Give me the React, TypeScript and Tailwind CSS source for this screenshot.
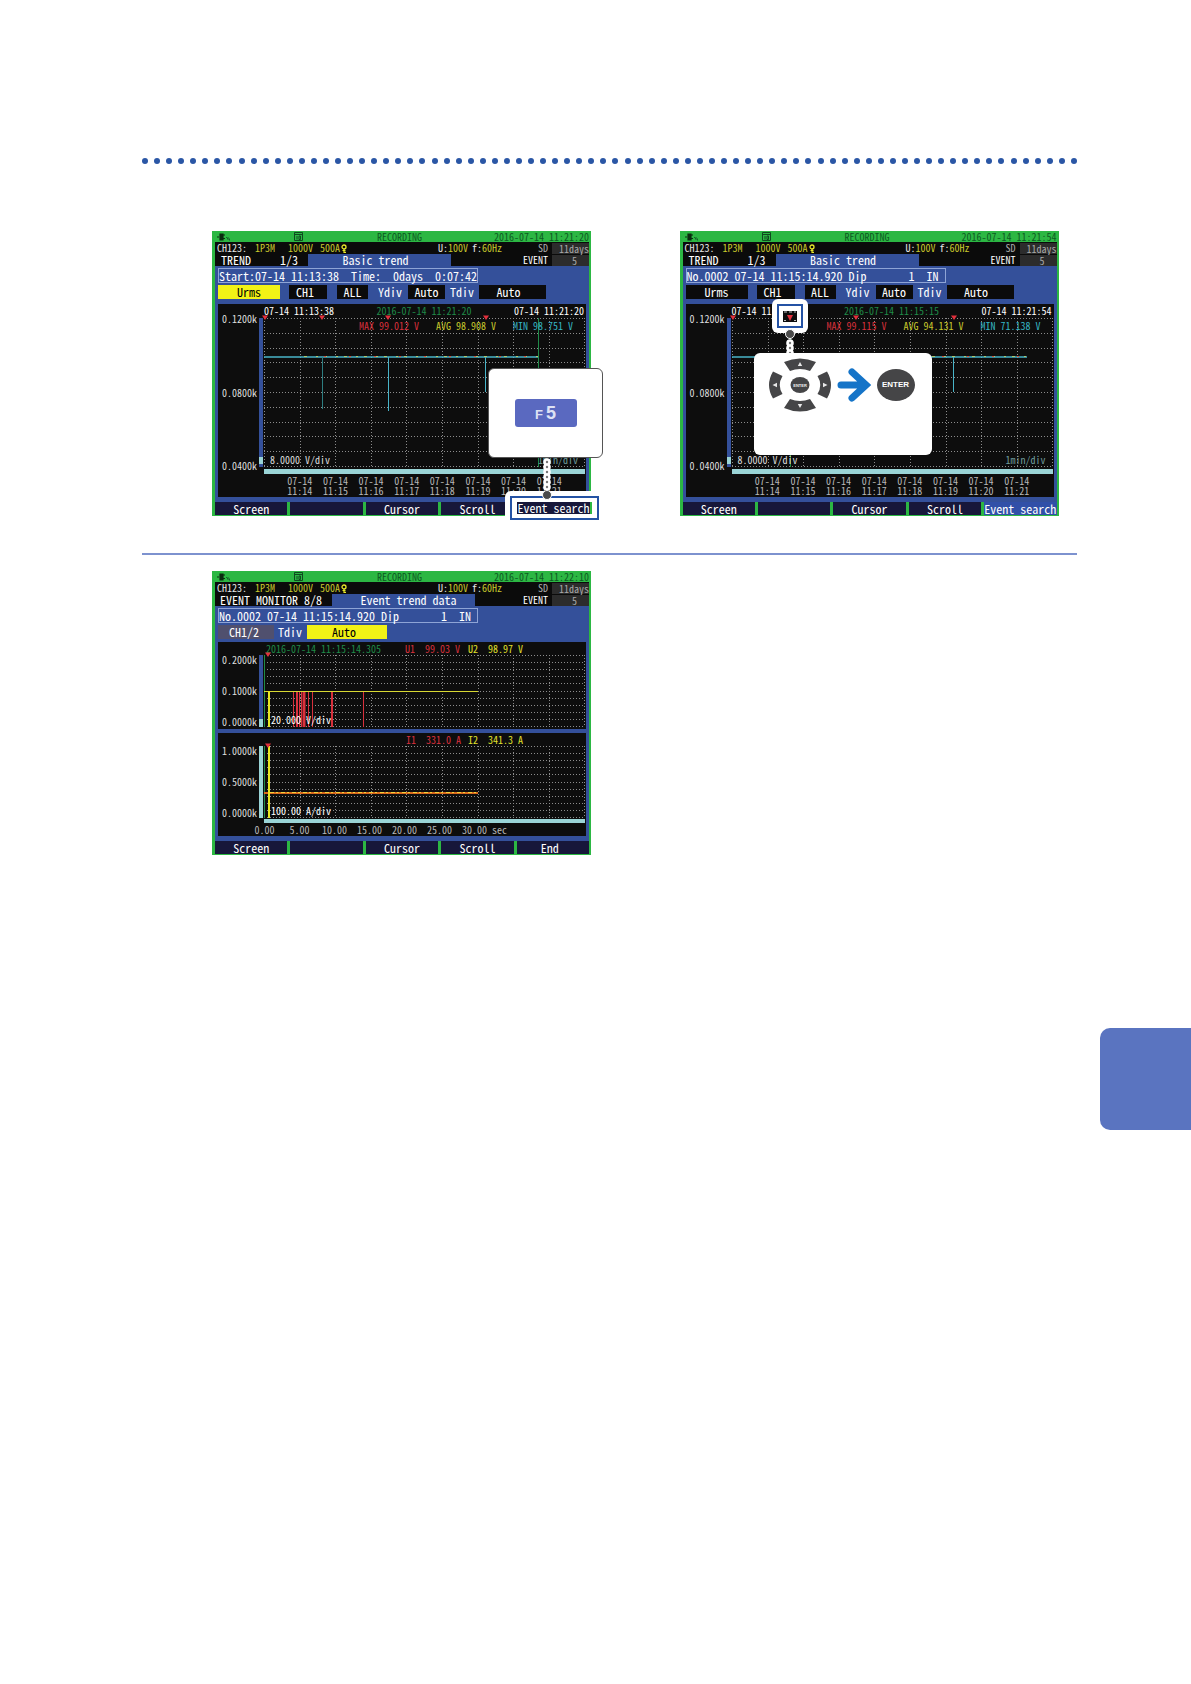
import type { ReactNode } from "react";

const FONT = "font-['Noto_Sans_Mono_CJK_JP','Liberation_Mono',monospace]";

function range(n: number) {
  return Array.from({ length: n }, (_, i) => i);
}

function PlugIcon() {
  return (
    <svg width="14" height="8" viewBox="0 0 14 8" className="shrink-0">
      <path d="M0 4h2M3 1h3v6h-3zM6 2h2M6 5.5h2" stroke="#0b2a10" strokeWidth="1.2" fill="#0b2a10" />
      <path d="M9 4l2 2M11 4v3M12.500 5.500v2" stroke="#14602a" strokeWidth="1" fill="none" />
    </svg>
  );
}

function CardIcon() {
  return (
    <svg width="9" height="9" viewBox="0 0 9 9" className="shrink-0">
      <path d="M.5 .5h8v8h-8zM1 2.500h7M3 4v3.500M5 4h1.500v3.500H5z" stroke="#0f4a20" strokeWidth="1" fill="none" />
    </svg>
  );
}

function LockIcon() {
  return (
    <svg width="6" height="9" viewBox="0 0 6 9" className="shrink-0">
      <circle cx="3" cy="3" r="2" stroke="#e8e82a" strokeWidth="1.3" fill="none" />
      <path d="M3 5v4M1.500 6.500h3M3 8.400h2" stroke="#e8e82a" strokeWidth="1.2" />
    </svg>
  );
}

function StatusBar({ clock }: { clock: string }) {
  return (
    <>
      <div className="flex h-[11px] items-center bg-[#2cb743] text-[10px] leading-[11px] text-[#0c5a22]">
        <span className="w-[79px] pl-0.5"><PlugIcon /></span>
        <span className="w-[83px]"><CardIcon /></span>
        <span>RECORDING</span>
        <span className="ml-auto">{clock}</span>
      </div>
      <div className="flex h-3 items-center bg-[#0b0b0b] pl-0.5 text-[10px] leading-3 text-[#c9c92c]">
        <span className="w-[38px] text-[#e6e6e6]">CH123:</span>
        <span className="w-[33px]">1P3M</span>
        <span className="w-8">1000V</span>
        <span className="w-[21px]">500A</span>
        <LockIcon />
        <span className="ml-auto w-8"><span className="text-[#e6e6e6]">U:</span>100V</span>
        <span className="mr-9 ml-0.5 w-[30px]"><span className="text-[#e6e6e6]">f:</span>60Hz</span>
        <span className="mr-1 text-[#a8a8a8]">SD</span>
        <span className="h-[11px] w-[37px] bg-[#2c2c2c] text-right leading-[11px] text-[#a8a8a8]">11days</span>
      </div>
    </>
  );
}

function TitleBar({ left, title, wide }: { left: ReactNode; title: string; wide?: boolean }) {
  return (
    <div className="flex h-3 items-center bg-[#0b0b0b] leading-3">
      <h2 className={wide ? "w-[117px] pl-[5px] text-[12px] whitespace-pre text-white" : "flex w-[93px] justify-between pr-2.5 pl-1.5 text-[12px] text-white"}>
        {left}
      </h2>
      <span className={wide ? "h-3 w-[143px] bg-[#34509a] pl-2.5 text-center text-[12px] text-white" : "h-3 w-[143px] bg-[#34509a] pr-2 text-center text-[12px] text-white"}>{title}</span>
      <span className="mr-1 ml-auto text-[10px] text-white">EVENT</span>
      <span className="h-[11px] w-[37px] bg-[#2c2c2c] pr-3 text-right text-[10px] leading-[11px] text-[#a8a8a8]">5</span>
    </div>
  );
}

function InfoBox({ children }: { children: ReactNode }) {
  return (
    <p className="h-[15px] w-[260px] border border-[#8ea4d6] text-[12px] leading-[13px] whitespace-pre text-white">
      {children}
    </p>
  );
}

function SoftKeys({ last, active }: { last: string; active?: boolean }) {
  return (
    <div className="grid h-[13px] grid-cols-5 gap-[3px] bg-[#2cb743] text-center text-[12px] leading-[13px] text-white">
      <button className="bg-[#17173a]">Screen</button>
      <button className="bg-[#17173a]" aria-label="Unassigned" />
      <button className="bg-[#17173a]">Cursor</button>
      <button className="bg-[#17173a]">Scroll</button>
      <button className={active ? "bg-[#3150a8] whitespace-nowrap" : "bg-[#17173a] pr-1.5 whitespace-nowrap"}>{last}</button>
    </div>
  );
}

function Screen({ clock, title, children, keys }: { clock: string; title: ReactNode; children: ReactNode; keys: ReactNode }) {
  return (
    <section className="w-full max-w-[379px] border-r-2 border-b border-l-3 border-[#2cb743] bg-[#34509a]">
      <StatusBar clock={clock} />
      {title}
      <div className="px-[3px] pt-0.5 pb-[5px]">{children}</div>
      {keys}
    </section>
  );
}

function GridLines({ height }: { height: number }) {
  return (
    <g stroke="#8c8c8c" strokeWidth="1" strokeDasharray="1 2">
      {range(10).map((i) => (
        <line key={"v" + i} x1={Math.round(i * 35.600) + 0.5} x2={Math.round(i * 35.600) + 0.5} y1="0" y2={height} />
      ))}
      {range(11).map((i) => {
        const y = Math.round((i * (height - 1)) / 10) + 0.5;
        return <line key={"h" + i} x1="0" x2="321" y1={y} y2={y} />;
      })}
    </g>
  );
}

function Marker({ x }: { x: number }) {
  return <path d={`M${x - 3} -2.500h6l-3 4.500z`} fill="#e2303c" />;
}

function TrendPanel({ start, now, end, max, avg, min, children }: {
  start: string; now: string; end: string; max: string; avg: string; min: string; children: ReactNode;
}) {
  return (
    <div className="h-[193px] bg-[#0d0d0d] text-[10px] leading-[10px] text-[#dedede]">
      <div className="flex h-3.5 items-center justify-between pr-0.5 pl-[46px] text-white">
        <span>{start}</span>
        <span className="text-[#1f8a48]">{now}</span>
        <span>{end}</span>
      </div>
      <div className="flex h-[149px]">
        <div className="-my-1 flex w-[39px] flex-col justify-between text-right">
          <span>0.1200k</span>
          <span>0.0800k</span>
          <span>0.0400k</span>
        </div>
        <div className="mr-[1px] ml-0.5 flex w-1 flex-col justify-end bg-[#34509a] pb-[3px]">
          <div className="h-[7px] bg-[#9ad4d6]" />
        </div>
        <div className="relative flex-1">
          <svg className="block h-[149px] w-[321px] overflow-visible" viewBox="0 0 321 149">
            <GridLines height={149} />
            {children}
          </svg>
          <div className="absolute top-[3px] left-[95px] flex gap-[17px] whitespace-nowrap">
            <span className="text-[#d8303c]">MAX {max} V</span>
            <span className="text-[#c9c92c]">AVG {avg} V</span>
            <span className="text-[#35b5c4]">MIN {min} V</span>
          </div>
          <div className="absolute right-2 bottom-0.5 left-1.5 flex justify-between">
            <span>8.0000 V/div</span>
            <span className="text-[#6f9c9c]">1min/div</span>
          </div>
        </div>
      </div>
      <div className="mt-0.5 mr-[1px] ml-[46px] h-[5px] bg-[#9ad4d6]" />
      <div className="mt-0.5 mr-[1px] ml-[46px] grid grid-cols-8 px-[18px] text-center text-[#b8b8b8]">
        {range(8).map((i) => (
          <span key={i}>07-14 11:{14 + i}</span>
        ))}
      </div>
    </div>
  );
}

function Controls({ active }: { active?: boolean }) {
  return (
    <div className="mt-0.5 mb-[5px] flex h-3.5 text-[12px] leading-[14px] text-white">
      <button className={active ? "w-[62px] bg-[#f2f216] text-black" : "w-[62px] bg-[#0b0b0b]"}>Urms</button>
      <button className="ml-[9px] w-[38px] bg-[#0b0b0b] pr-1.5">CH1</button>
      <button className="ml-2.5 w-[31px] bg-[#0b0b0b]">ALL</button>
      <span className="ml-2.5 w-[30px]">Ydiv</span>
      <button className="w-[37px] bg-[#0b0b0b]">Auto</button>
      <span className="ml-[5px] w-[29px]">Tdiv</span>
      <button className="w-[67px] bg-[#0b0b0b] pr-2">Auto</button>
    </div>
  );
}

function Trace({ end }: { end: number }) {
  return (
    <g fill="none">
      <line x1="0" x2={end} y1="39" y2="39" stroke="#48b4c8" strokeWidth="1.500" />
      <line x1="40" x2={end} y1="38.500" y2="38.500" stroke="#b4c86a" strokeWidth="1" strokeDasharray="3 9 2 6" />
      <line x1="60" x2={end} y1="38.500" y2="38.500" stroke="#d8503c" strokeWidth="1" strokeDasharray="2 23" />
    </g>
  );
}

function Chain({ height }: { height: number }) {
  const beads = range(Math.floor(height / 5));
  return (
    <svg width="10" height={height} viewBox={`0 0 10 ${height}`} className="block">
      {beads.map((i) => (
        <circle key={i} cx="5" cy={i * 5 + 4} r="3.800" fill="#fff" />
      ))}
      {beads.map((i) => (
        <circle key={i} cx="5" cy={i * 5 + 4} r="1.200" fill="#777" />
      ))}
    </svg>
  );
}

function KeyCallout() {
  return (
    <>
      <div className="absolute top-[260px] left-[293px] rounded-md bg-white p-[5px]">
        <div className="flex h-6 w-[89px] items-center justify-center border-2 border-[#2452a4]">
          <button className="h-3 w-[75px] border-r-2 border-[#2cb743] bg-[#17173a] text-[12px] leading-3 whitespace-nowrap text-white">
            Event search
          </button>
        </div>
      </div>
      <div className="absolute top-[227px] left-[330px] flex flex-col items-center">
        <Chain height={32} />
        <div className="size-2.5 rounded-full border border-white bg-[#4a4a4a]" />
      </div>
      <div className="absolute top-[137px] left-[276px] flex h-[90px] w-[115px] items-center justify-center rounded-md border border-[#555] bg-white">
        <button className="flex h-7 w-[62px] items-center justify-center gap-[3px] rounded-[3px] bg-[#5a69c0] font-['Liberation_Sans',sans-serif] font-bold text-[#dde2f4]">
          <span className="pt-0.5 text-[13px] leading-none">F</span>
          <span className="text-[18px] leading-none">5</span>
        </button>
      </div>
    </>
  );
}

function CursorPad() {
  return (
    <svg width="62" height="54" viewBox="-31 -27 62 54" role="img" aria-label="Cursor keys">
      <g fill="#454547">
        <path d="M-16 -23Q0 -30 16 -23L10 -14Q0 -18 -10 -14Z" />
        <path d="M-16 23Q0 30 16 23L10 14Q0 18 -10 14Z" />
        <path d="M-27 -13.500Q-35 0 -27 13.500L-17.500 9Q-23 0 -17.500 -9Z" />
        <path d="M27 -13.500Q35 0 27 13.500L17.500 9Q23 0 17.500 -9Z" />
        <ellipse rx="9.500" ry="8" />
      </g>
      <g fill="#e8e8e8">
        <path d="M0 -23l2.200 4h-4.400zM0 23l2.200 -4h-4.400zM-27.500 0l4.500 -2.200v4.400zM27.500 0l-4.500 -2.200v4.400z" />
      </g>
      <text y="1.500" textAnchor="middle" fontFamily="Liberation Sans" fontWeight="700" fontSize="4" fill="#eee">ENTER</text>
    </svg>
  );
}

function CursorCallout() {
  return (
    <>
      <div className="absolute top-[68px] left-[92px] rounded-md bg-white p-[5px]">
        <div className="flex h-6 w-[26px] items-center justify-center border-2 border-[#2452a4]">
          <svg width="14" height="11" viewBox="0 0 14 11">
            <rect width="14" height="11" fill="#0d0d0d" />
            <path d="M1 1h3M6 1h3M11 1h2M1 9.500h2M11 9.500h2" stroke="#bbb" />
            <path d="M4 4h6L7 10z" fill="#e2303c" />
          </svg>
        </div>
      </div>
      <div className="absolute top-[98px] left-[105px] flex flex-col items-center">
        <div className="size-2.5 rounded-full border border-white bg-[#4a4a4a]" />
        <Chain height={16} />
      </div>
      <div className="absolute top-[122px] left-[74px] flex h-[102px] w-[178px] gap-1.5 rounded-md bg-white pt-[5px] pl-[15px]">
        <CursorPad />
        <svg width="34" height="54" viewBox="0 0 34 54">
          <path d="M4 27H28M15 14L29 27L15 40" fill="none" stroke="#1574c8" strokeWidth="7" strokeLinecap="round" strokeLinejoin="miter" />
        </svg>
        <button className="mt-[11px] h-8 w-[38px] rounded-[50%] bg-[#454547] text-center font-['Liberation_Sans',sans-serif] text-[8px] font-bold text-white">
          ENTER
        </button>
      </div>
    </>
  );
}

function EventPlot({ labels, height, full, unit, children }: {
  labels: string[]; height: number; full?: boolean; unit: string; children: ReactNode;
}) {
  return (
    <div className="flex h-[72px]">
      <div className="flex w-[39px] flex-col justify-between text-right">
        {labels.map((l) => (
          <span key={l}>{l}</span>
        ))}
      </div>
      <div className={full ? "mr-[1px] ml-0.5 w-1 bg-[#9ad4d6]" : "mr-[1px] ml-0.5 flex w-1 flex-col justify-end bg-[#34509a]"}>
        <div className="h-2 bg-[#9ad4d6]" />
      </div>
      <div className="relative flex-1">
        <svg className="block h-[72px] w-[321px] overflow-visible" viewBox="0 0 321 72">
          <GridLines height={height} />
          {children}
        </svg>
        <span className="absolute bottom-0.5 left-[7px] text-white">{unit}</span>
      </div>
    </div>
  );
}

const DIPS = [
  { x: 29.5, w: 1 }, { x: 33, w: 2 }, { x: 35.5, w: 1 }, { x: 37.5, w: 1 }, { x: 40, w: 3 },
  { x: 44.5, w: 1 }, { x: 48.5, w: 1 }, { x: 68, w: 2 }, { x: 99.5, w: 1 },
];

export default function App() {
  return (
    <main className={"min-h-screen overflow-hidden bg-white pt-[158px] pb-20 " + FONT}>
      <div className="pr-[114px] pl-[142px]">
        <div className="flex justify-between" aria-hidden="true">
          {range(78).map((i) => (
            <span key={i} className="size-1.5 rounded-full bg-[#2a56a5]" />
          ))}
        </div>

        <div className="mt-[67px] grid grid-cols-2">
          <div className="pl-[70px]">
            <div className="relative">
              <Screen
                clock="2016-07-14 11:21:20"
                title={<TitleBar left={<><span>TREND</span><span>1/3</span></>} title="Basic trend" />}
                keys={<SoftKeys last="Event search" />}
              >
                <InfoBox>Start:07-14 11:13:38  Time:  0days  0:07:42</InfoBox>
                <Controls active />
                <TrendPanel start="07-14 11:13:38" now="2016-07-14 11:21:20" end="07-14 11:21:20" max="99.012" avg="98.908" min="98.751">
                  <line x1="274.500" x2="274.500" y1="0" y2="149" stroke="#1f8a48" />
                  <Trace end={274} />
                  <line x1="58.500" x2="58.500" y1="39" y2="91" stroke="#2d7d80" />
                  <line x1="124.500" x2="124.500" y1="39" y2="93" stroke="#48b4c8" />
                  <line x1="221.500" x2="221.500" y1="39" y2="74" stroke="#48b4c8" />
                  <Marker x={1} />
                  <Marker x={58} />
                  <Marker x={124} />
                  <Marker x={222} />
                </TrendPanel>
              </Screen>
              <KeyCallout />
            </div>
          </div>

          <div className="pl-[70px]">
            <div className="relative">
              <Screen
                clock="2016-07-14 11:21:54"
                title={<TitleBar left={<><span>TREND</span><span>1/3</span></>} title="Basic trend" />}
                keys={<SoftKeys last="Event search" active />}
              >
                <InfoBox>No.0002 07-14 11:15:14.920 Dip       1  IN</InfoBox>
                <Controls />
                <TrendPanel start="07-14 11:13:38" now="2016-07-14 11:15:15" end="07-14 11:21:54" max="99.115" avg="94.131" min="71.138">
                  <line x1="58.500" x2="58.500" y1="0" y2="149" stroke="#1f8a48" />
                  <Trace end={295} />
                  <line x1="221.500" x2="221.500" y1="39" y2="74" stroke="#48b4c8" />
                  <Marker x={1} />
                  <Marker x={124} />
                  <Marker x={222} />
                </TrendPanel>
              </Screen>
              <CursorCallout />
            </div>
          </div>
        </div>

        <hr className="mt-[37px] border-t-2 border-[#7d92cf]" />

        <div className="mt-4 grid grid-cols-2">
          <div className="pl-[70px]">
            <Screen
              clock="2016-07-14 11:22:10"
              title={<TitleBar wide left="EVENT MONITOR 8/8" title="Event trend data" />}
              keys={<SoftKeys last="End" />}
            >
              <InfoBox>No.0002 07-14 11:15:14.920 Dip       1  IN</InfoBox>
              <div className="mt-0.5 mb-[3px] flex h-3.5 text-[12px] leading-[14px] text-white">
                <button className="w-14 bg-[#50506e] pr-1">CH1/2</button>
                <span className="ml-1 w-[29px]">Tdiv</span>
                <button className="w-20 bg-[#f2f216] pr-1.5 text-black">Auto</button>
              </div>
              <div className="h-[87px] bg-[#0d0d0d] text-[10px] leading-[10px] text-[#dedede]">
                <div className="flex h-[13px] items-center pl-12 whitespace-pre">
                  <span className="w-[139px] text-[#1f8a48]">2016-07-14 11:15:14.305</span>
                  <span className="w-[63px] text-[#d8303c]">U1  99.03 V</span>
                  <span className="text-[#e0e02c]">U2  98.97 V</span>
                </div>
                <EventPlot labels={["0.2000k", "0.1000k", "0.0000k"]} height={72} unit="20.000 V/div">
                  <line x1="0.500" x2="0.500" y1="0" y2="72" stroke="#1f8a48" />
                  {DIPS.map((d) => (
                    <line key={d.x} x1={d.x} x2={d.x} y1="36" y2="72" stroke="#d8303c" strokeWidth={d.w} />
                  ))}
                  <line x1="0" x2="214" y1="36.500" y2="36.500" stroke="#d8d832" />
                  <line x1="5" x2="5" y1="36" y2="72" stroke="#e8e820" strokeWidth="2" />
                  <Marker x={4} />
                </EventPlot>
              </div>
              <div className="mt-1 h-[103px] bg-[#0d0d0d] text-[10px] leading-[10px] text-[#dedede]">
                <div className="flex h-[13px] items-center pl-[188px] whitespace-pre">
                  <span className="w-[62px] text-[#d8303c]">I1  331.0 A</span>
                  <span className="text-[#e0e02c]">I2  341.3 A</span>
                </div>
                <EventPlot labels={["1.0000k", "0.5000k", "0.0000k"]} height={72} full unit="100.00 A/div">
                  <line x1="0.500" x2="0.500" y1="0" y2="72" stroke="#1f8a48" />
                  <line x1="0" x2="214" y1="47" y2="47" stroke="#d86a1c" strokeWidth="2" />
                  <line x1="6" x2="214" y1="46.500" y2="46.500" stroke="#f0d23c" strokeWidth="1" strokeDasharray="4 2 2 3" />
                  <line x1="5" x2="5" y1="0" y2="72" stroke="#e8e820" strokeWidth="2" />
                  <Marker x={4} />
                </EventPlot>
                <div className="mt-[1px] mr-[1px] ml-[46px] h-1 bg-[#9ad4d6]" />
                <div className="mt-0.5 flex pl-[29px] text-center text-[#b8b8b8]">
                  {["0.00", "5.00", "10.00", "15.00", "20.00", "25.00", "30.00"].map((t) => (
                    <span key={t} className="w-[35px]">{t}</span>
                  ))}
                  <span>sec</span>
                </div>
              </div>
            </Screen>
          </div>
        </div>
      </div>

      <div className="mt-[173px] ml-auto h-[102px] w-[91px] rounded-l-[10px] bg-[#5a74c0]" />
    </main>
  );
}
